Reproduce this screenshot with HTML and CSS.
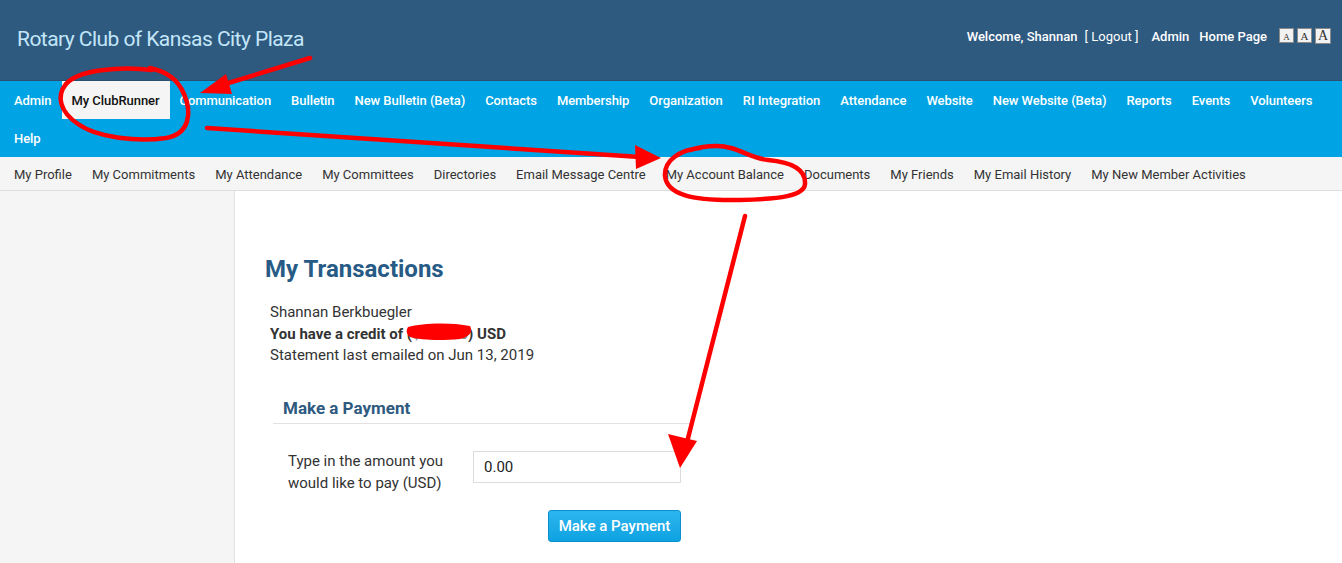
FILE: index.html
```html
<!DOCTYPE html>
<html lang="en">
<head>
    <meta charset="UTF-8">
    <meta name="viewport" content="width=device-width, initial-scale=1.0">
    <title>My Transactions</title>
    <link rel="stylesheet" href="styles.css">
</head>
<body>
    <header class="top">
        <div class="club-name">Rotary Club of Kansas City Plaza</div>
        <div class="top-links">
            <span>Welcome, Shannan</span>
            <a href="" class="logout">[ Logout ]</a>
            <a href="">Admin</a>
            <a href="">Home Page</a>
            <span class="sizes">
                <span class="size s1">A</span>
                <span class="size s2">A</span>
                <span class="size s3">A</span>
            </span>
        </div>
    </header>

    <nav class="main-nav">
        <a href="">Admin</a>
        <a href="" class="active">My ClubRunner</a>
        <a href="">Communication</a>
        <a href="">Bulletin</a>
        <a href="">New Bulletin (Beta)</a>
        <a href="">Contacts</a>
        <a href="">Membership</a>
        <a href="">Organization</a>
        <a href="">RI Integration</a>
        <a href="">Attendance</a>
        <a href="">Website</a>
        <a href="">New Website (Beta)</a>
        <a href="">Reports</a>
        <a href="">Events</a>
        <a href="">Volunteers</a>
        <a href="">Help</a>
    </nav>

    <nav class="sub-nav">
        <a href="">My Profile</a>
        <a href="">My Commitments</a>
        <a href="">My Attendance</a>
        <a href="">My Committees</a>
        <a href="">Directories</a>
        <a href="">Email Message Centre</a>
        <a href="">My Account Balance</a>
        <a href="">Documents</a>
        <a href="">My Friends</a>
        <a href="">My Email History</a>
        <a href="">My New Member Activities</a>
    </nav>

    <div class="page">
        <aside class="sidebar"></aside>
        <main class="content">
            <h1>My Transactions</h1>
            <div class="summary">
                <div>Shannan Berkbuegler</div>
                <div class="credit">You have a credit of (<span class="hidden-amount">$000.00</span>) USD</div>
                <div>Statement last emailed on Jun 13, 2019</div>
            </div>

            <section class="payment">
                <h2>Make a Payment</h2>
                <div class="pay-row">
                    <label for="amount">Type in the amount you would like to pay (USD)</label>
                    <input type="text" id="amount" value="0.00">
                </div>
                <div class="pay-actions">
                    <button type="button">Make a Payment</button>
                </div>
            </section>
        </main>
    </div>

    <!-- red markup drawn on top of the screenshot -->
    <svg class="marks" width="1342" height="563" viewBox="0 0 1342 563">
        <g fill="none" stroke="#f00" stroke-width="4.5" stroke-linecap="round" stroke-linejoin="round">
            <path d="M152 70 C120 66 78 70 66 84 C56 96 60 112 78 124 C98 138 138 142 166 138 C190 134 192 112 184 94 C178 80 168 72 150 68"/>
            <path d="M310 58 L222 85"/>
            <path d="M207 128 L640 157"/>
            <path d="M700 148 C680 150 664 160 665 176 C667 194 690 201 740 200 C780 199 804 196 805 184 C806 168 790 162 768 160 C748 158 738 146 716 146 C706 146 700 147 690 150"/>
            <path d="M745 216 L686 446"/>
        </g>
        <g fill="#f00">
            <polygon points="200,93 226,74 232,94"/>
            <polygon points="661,158 635,145 636,169"/>
            <polygon points="680,468 668,434 697,441"/>
        </g>
        <path d="M408 327 C422 323 450 322 470 326 C473 331 470 337 460 339 C440 341 420 340 410 337 C406 334 406 330 408 327 Z" fill="#f00"/>
    </svg>
</body>
</html>
```

FILE: styles.css
```css
html, body {
    margin: 0;
    padding: 0;
}
body {
    font-family: Roboto, "Liberation Sans", sans-serif;
    color: #333;
    background: #fff;
    position: relative;
    height: 563px;
    overflow: hidden;
}
a {
    text-decoration: none;
    color: inherit;
}

/* header */
.top {
    height: 80px;
    background: #2e5a80;
    border-bottom: 1px solid #2a4f70;
    display: flex;
    align-items: center;
    justify-content: space-between;
    padding: 0 11px 0 17px;
}
.club-name {
    color: #c3e6f8;
    font-size: 21px;
    letter-spacing: -0.55px;
    margin-top: -3px;
}
.top-links {
    display: flex;
    align-items: center;
    color: #fff;
    font-size: 13px;
    font-weight: 500;
    margin-top: -8px;
}
.top-links > * {
    margin-left: 10px;
}
.top-links .logout {
    margin-left: 7px;
    margin-right: 3px;
    font-weight: 400;
}
.sizes {
    display: flex;
    gap: 3px;
    margin-left: 12px;
}
.size {
    width: 13px;
    height: 13px;
    background: #f2f2f2;
    border: 1px solid #8a8a8a;
    color: #333;
    font-family: "Liberation Serif", serif;
    display: flex;
    align-items: flex-end;
    justify-content: center;
    line-height: 1;
}
.size.s1 { font-size: 9px; }
.size.s2 { font-size: 11px; }
.size.s3 { font-size: 14px; width: 14px; height: 14px; }

/* main navigation */
.main-nav {
    background: #00a3e3;
    display: flex;
    flex-wrap: wrap;
    padding: 0 0 0 4px;
}
.main-nav a {
    color: #fff;
    font-size: 13px;
    font-weight: 500;
    letter-spacing: -0.06px;
    padding: 0 10px;
    line-height: 39px;
    height: 38px;
}
.main-nav a.active {
    background: #f5f5f5;
    color: #111;
}

/* sub navigation */
.sub-nav {
    background: #f5f5f5;
    border-bottom: 1px solid #dedede;
    display: flex;
    padding: 1px 4px 0;
    height: 32px;
    align-items: center;
}
.sub-nav a {
    font-size: 13px;
    color: #333;
    padding: 0 10px;
}

/* body */
.page {
    display: flex;
    height: 372px;
}
.sidebar {
    width: 234px;
    background: #f5f5f5;
    border-right: 1px solid #e2e2e2;
}
.content {
    padding: 62px 30px 0;
    flex: 1;
}
.content h1 {
    margin: 0;
    font-size: 24px;
    font-weight: 700;
    color: #275b86;
    line-height: 32px;
}
.summary {
    margin: 17px 0 0 5px;
    font-size: 15px;
    line-height: 21.5px;
}
.credit {
    font-weight: 700;
}
.hidden-amount {
    color: #888;
}

.payment {
    width: 417px;
    margin: 31.5px 0 0 8px;
}
.payment h2 {
    margin: 0;
    padding: 0 10px 5px;
    font-size: 17px;
    font-weight: 700;
    color: #2e5a80;
    line-height: 20px;
    border-bottom: 1px solid #e2e2e2;
}
.pay-row {
    display: flex;
    align-items: flex-start;
    margin-top: 26px;
    padding-left: 15px;
}
.pay-row label {
    width: 185px;
    font-size: 15px;
    line-height: 22px;
}
.pay-row input {
    width: 208px;
    height: 32px;
    box-sizing: border-box;
    border: 1px solid #dcdcdc;
    padding: 0 10px;
    font-family: Roboto, "Liberation Sans", sans-serif;
    font-size: 15px;
    color: #222;
    margin-top: 1px;
}
.pay-actions {
    display: flex;
    justify-content: flex-end;
    padding-right: 9px;
    margin-top: 16px;
}
.pay-actions button {
    width: 133px;
    height: 32px;
    border: 1px solid #0a8fcf;
    border-radius: 3px;
    background: linear-gradient(#2db6ee, #0ea2e2);
    color: #fff;
    font-family: Roboto, "Liberation Sans", sans-serif;
    font-size: 15px;
    font-weight: 500;
}

.marks {
    position: absolute;
    top: 0;
    left: 0;
    pointer-events: none;
}
```
